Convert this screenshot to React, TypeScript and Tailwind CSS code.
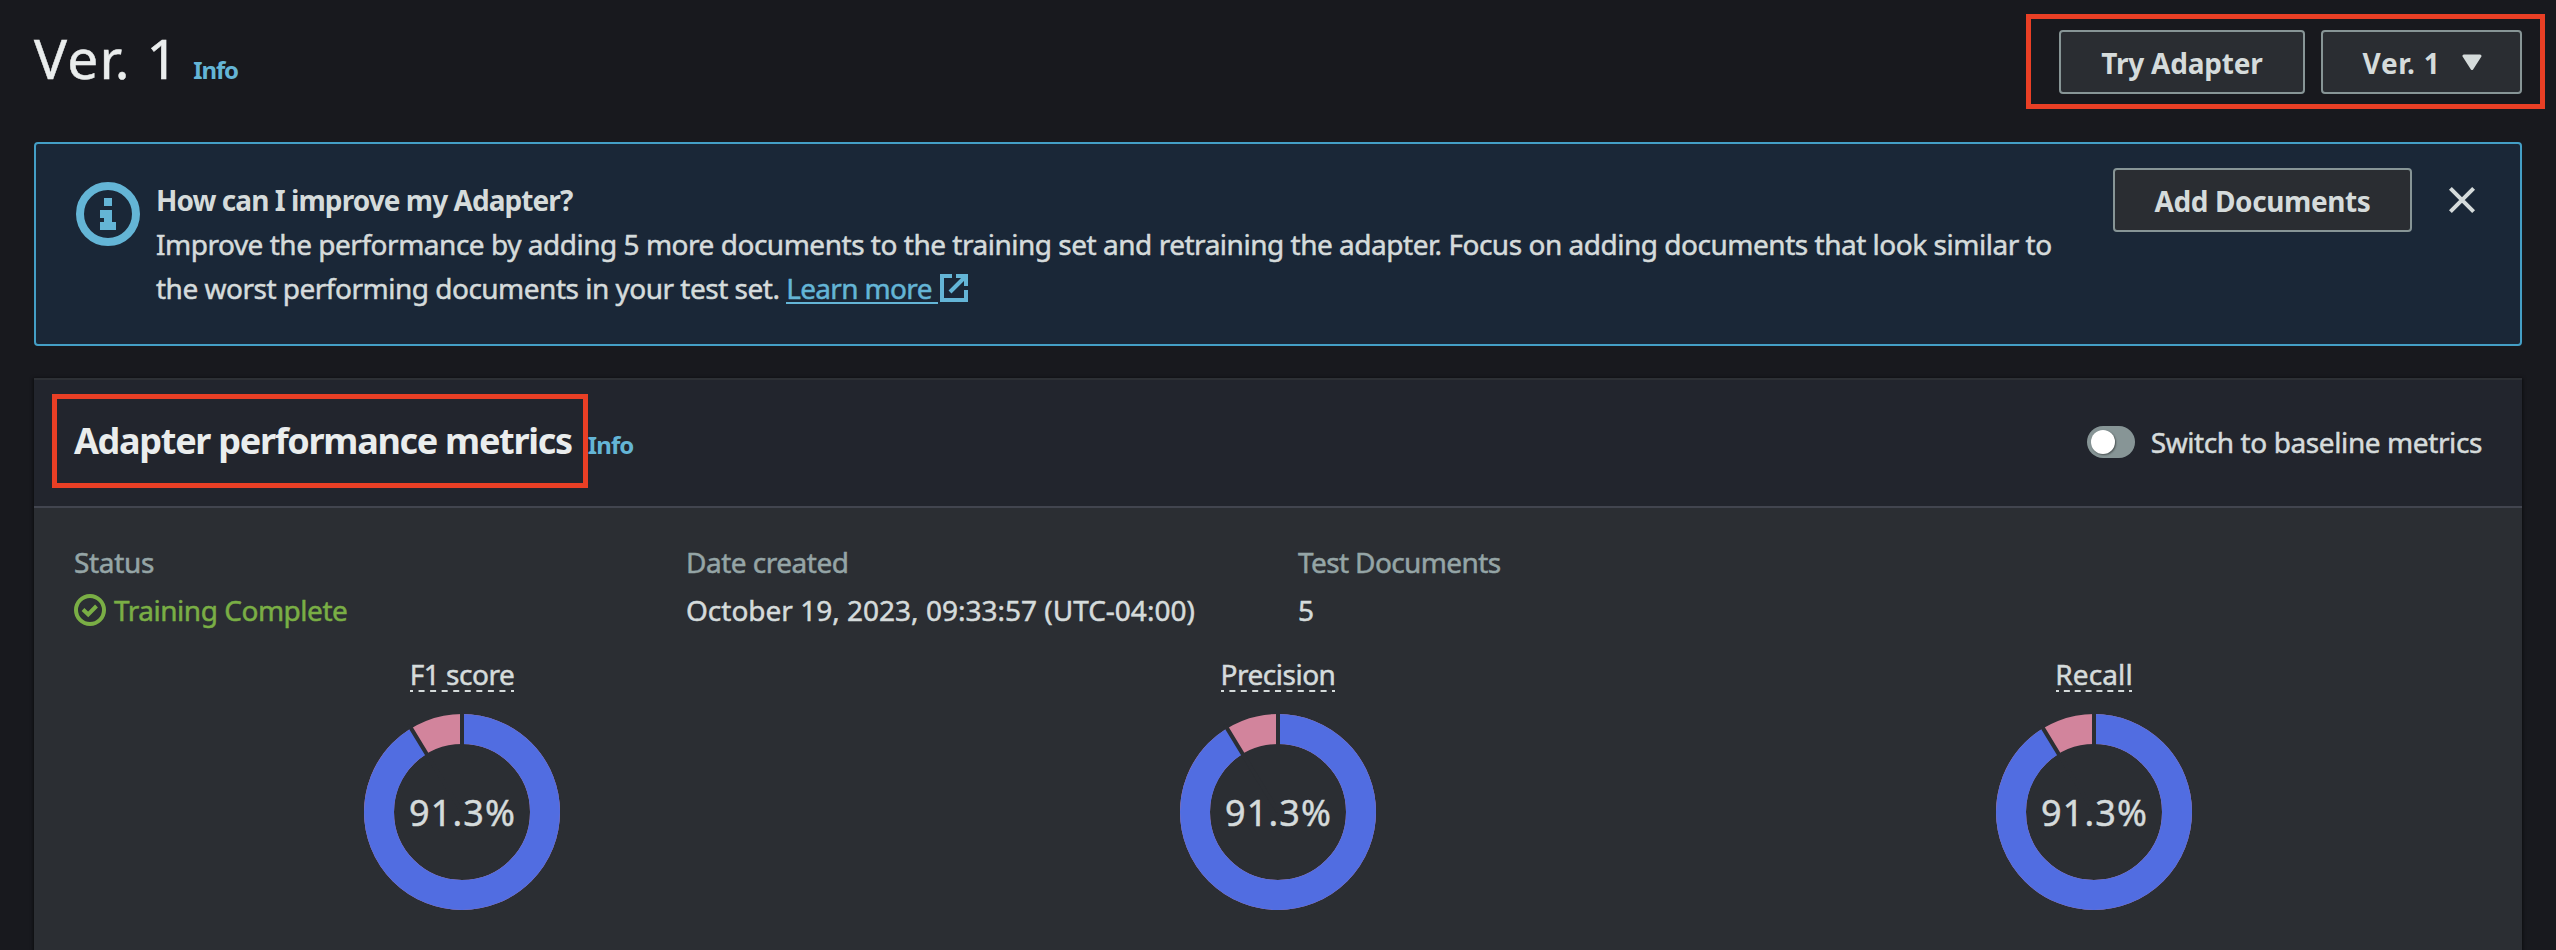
import React from 'react';

function InfoIcon() {
  return (
    <svg width="64" height="64" viewBox="0 0 64 64" className="mt-[14px] shrink-0 text-[#64b5d6]">
      <circle cx="32" cy="32" r="28" fill="none" stroke="currentColor" strokeWidth="8" />
      <path d="M28 16h8v8h-8zM24 28h12v12h4v8H24v-8h4v-4h-4z" fill="currentColor" />
    </svg>
  );
}

function ExternalIcon() {
  return (
    <svg width="28" height="28" viewBox="0 0 28 28" className="ml-0.5 shrink-0" fill="none" stroke="currentColor" strokeWidth="4">
      <path d="M12 2H2V26H26V16" />
      <path d="M16 2H26V12" />
      <path d="M25 3L10 18" />
    </svg>
  );
}

function CloseIcon() {
  return (
    <svg width="32" height="32" viewBox="0 0 32 32" className="mt-4 shrink-0 text-[#d5dbdb]" stroke="currentColor" strokeWidth="4">
      <path d="M4.4 4.4L27.6 27.6M27.6 4.4L4.4 27.6" />
    </svg>
  );
}

function CheckIcon() {
  return (
    <svg width="32" height="32" viewBox="0 0 32 32" className="shrink-0" fill="none" stroke="currentColor" strokeWidth="4">
      <circle cx="16" cy="16" r="14" />
      <path d="M9 15.5L14.2 20.5L22.5 12" />
    </svg>
  );
}

const buttonClass =
  'flex h-16 shrink-0 items-center justify-center rounded-[4px] border-2 border-[#879596] bg-[#2a2d32] pt-0.5 text-[28px] font-bold leading-[44px] text-[#d5dbdb] [-webkit-text-stroke:0]';

type MetricProps = { label: string; spacing: string; underline: number; periods: number; value: number };

function Metric({ label, spacing, underline, periods, value }: MetricProps) {
  const pct = `${value}%`;
  const angle = (value / 100) * 2 * Math.PI;
  const x = 100 + 102 * Math.sin(angle);
  const y = 100 - 102 * Math.cos(angle);
  return (
    <div className="flex flex-col items-center">
      <div className="flex h-9 flex-col items-center">
        <div className={`h-[34px] whitespace-nowrap text-[28px] leading-9 ${spacing}`}>{label}</div>
        <svg width={underline} height="2" viewBox={`0 0 ${underline} 2`}>
          <line x1="0" y1="1" x2={underline} y2="1" stroke="#d5dbdb" strokeWidth="2" strokeDasharray={`6 ${underline / periods - 6}`} strokeDashoffset="3" />
        </svg>
      </div>
      <svg width="200" height="200" viewBox="0 0 200 200" className="mt-5">
        <circle cx="100" cy="100" r="83" fill="none" stroke="#d2849c" strokeWidth="30" />
        <circle cx="100" cy="100" r="83" fill="none" stroke="#516de1" strokeWidth="30" pathLength="100" strokeDasharray={`${value} 100`} transform="rotate(-90 100 100)" />
        <path d={`M100 100V-2M100 100L${x} ${y}`} stroke="#2b2e33" strokeWidth="4" />
        <text x="100.5" y="114" textAnchor="middle" fontSize="36" letterSpacing="1.1" fill="#d5dbdb" stroke="#d5dbdb" strokeWidth="0.5">
          {pct}
        </text>
      </svg>
    </div>
  );
}

export default function App() {
  return (
    <div className="relative flex h-[950px] w-[2556px] flex-col overflow-hidden bg-[#18191e] px-[34px] pt-[30px] font-['Noto_Sans',sans-serif] text-[#d5dbdb] [-webkit-text-stroke:0.5px]">
      <header className="flex h-28 shrink-0 items-start justify-between">
        <div className="flex items-baseline">
          <h1 className="text-[55px] leading-[56px] tracking-[1.3px] text-[#eaeded]">Ver. 1</h1>
          <a className="ml-[14px] text-2xl font-bold leading-8 tracking-[-1.1px] text-[#64b5d6] [-webkit-text-stroke:0]">Info</a>
        </div>
        <div className="flex gap-4">
          <button className={`${buttonClass} w-[246px] tracking-[-0.2px]`}>Try Adapter</button>
          <button className={`${buttonClass} w-[201px] gap-[22px] pl-0.5 tracking-[0.7px]`}>
            Ver. 1
            <svg width="20" height="16" viewBox="0 0 20 16" className="-mt-0.5">
              <path d="M2 2H18L10 14.5Z" fill="#d5dbdb" stroke="#d5dbdb" strokeWidth="3" strokeLinejoin="round" />
            </svg>
          </button>
        </div>
      </header>

      <section className="flex h-[204px] shrink-0 items-start rounded-[4px] border-2 border-[#449fc6] bg-[#1a2737] pl-10 pr-[42px] pt-6">
        <InfoIcon />
        <div className="ml-4 mt-2.5 flex-1 whitespace-nowrap text-[28px] leading-[44px]">
          <div className="font-bold tracking-[-0.94px] [-webkit-text-stroke:0]">How can I improve my Adapter?</div>
          <div className="tracking-[-0.48px]">
            Improve the performance by adding 5 more documents to the training set and retraining the adapter. Focus on adding documents that look similar to
          </div>
          <div className="flex items-start tracking-[-0.5px]">
            <span className="whitespace-pre">the worst performing documents in your test set. </span>
            <a className="flex h-11 items-center text-[#64b5d6]">
              <span className="h-[38px] self-start whitespace-pre border-b-2 border-[#64b5d6] leading-[44px] tracking-[-0.66px]">Learn more </span>
              <ExternalIcon />
            </a>
          </div>
        </div>
        <button className={`${buttonClass} w-[299px] tracking-[-0.4px]`}>Add Documents</button>
        <div className="ml-[34px]">
          <CloseIcon />
        </div>
      </section>

      <section className="mt-8 flex flex-1 flex-col border-t-2 border-[#2d3035] bg-[#2b2e33] shadow-[0_1px_3px_1px_rgba(0,0,0,0.5)]">
        <div className="flex h-32 shrink-0 items-center justify-between border-b-2 border-[#42454f] bg-[#22252d] px-10 pb-0.5">
          <div className="flex items-baseline pb-0.5">
            <h2 className="whitespace-nowrap text-[36px] font-bold leading-[44px] tracking-[-1.29px] text-[#eaeded] [-webkit-text-stroke:0]">Adapter performance metrics</h2>
            <a className="ml-4 text-2xl font-bold leading-8 tracking-[-0.9px] text-[#64b5d6] [-webkit-text-stroke:0]">Info</a>
          </div>
          <div className="flex items-center gap-4">
            <div className="flex h-8 w-12 items-center rounded-full bg-[#879596] p-1">
              <div className="h-6 w-6 rounded-full bg-white shadow-[1px_1px_2px_rgba(0,0,0,0.45)]" />
            </div>
            <span className="whitespace-nowrap text-[28px] leading-[44px] tracking-[-0.4px]">Switch to baseline metrics</span>
          </div>
        </div>

        <div className="px-10 pt-8 text-[28px] leading-[44px]">
          <div className="grid grid-cols-4 gap-x-10">
            <div className="flex flex-col gap-1">
              <div className="tracking-[-0.32px] text-[#95a5a6]">Status</div>
              <div className="flex items-center gap-2 tracking-[-0.47px] text-[#7aae45]">
                <CheckIcon />
                Training Complete
              </div>
            </div>
            <div className="flex flex-col gap-1 whitespace-nowrap">
              <div className="tracking-[-0.5px] text-[#95a5a6]">Date created</div>
              <div>October 19, 2023, 09:33:57 (UTC-04:00)</div>
            </div>
            <div className="flex flex-col gap-1">
              <div className="tracking-[-0.62px] text-[#95a5a6]">Test Documents</div>
              <div>5</div>
            </div>
          </div>
          <div className="mt-6 grid grid-cols-3 gap-x-10">
            <Metric label="F1 score" spacing="tracking-[-0.5px]" underline={104} periods={9} value={91.3} />
            <Metric label="Precision" spacing="tracking-[-0.5px]" underline={114} periods={10} value={91.3} />
            <Metric label="Recall" spacing="tracking-[0.1px]" underline={76} periods={7} value={91.3} />
          </div>
        </div>
      </section>

      <div className="absolute left-[2026px] top-[14px] h-[95px] w-[519px] border-5 border-[#e93f25]" />
      <div className="absolute left-[52px] top-[394px] h-[94px] w-[536px] border-5 border-[#e93f25]" />
    </div>
  );
}
